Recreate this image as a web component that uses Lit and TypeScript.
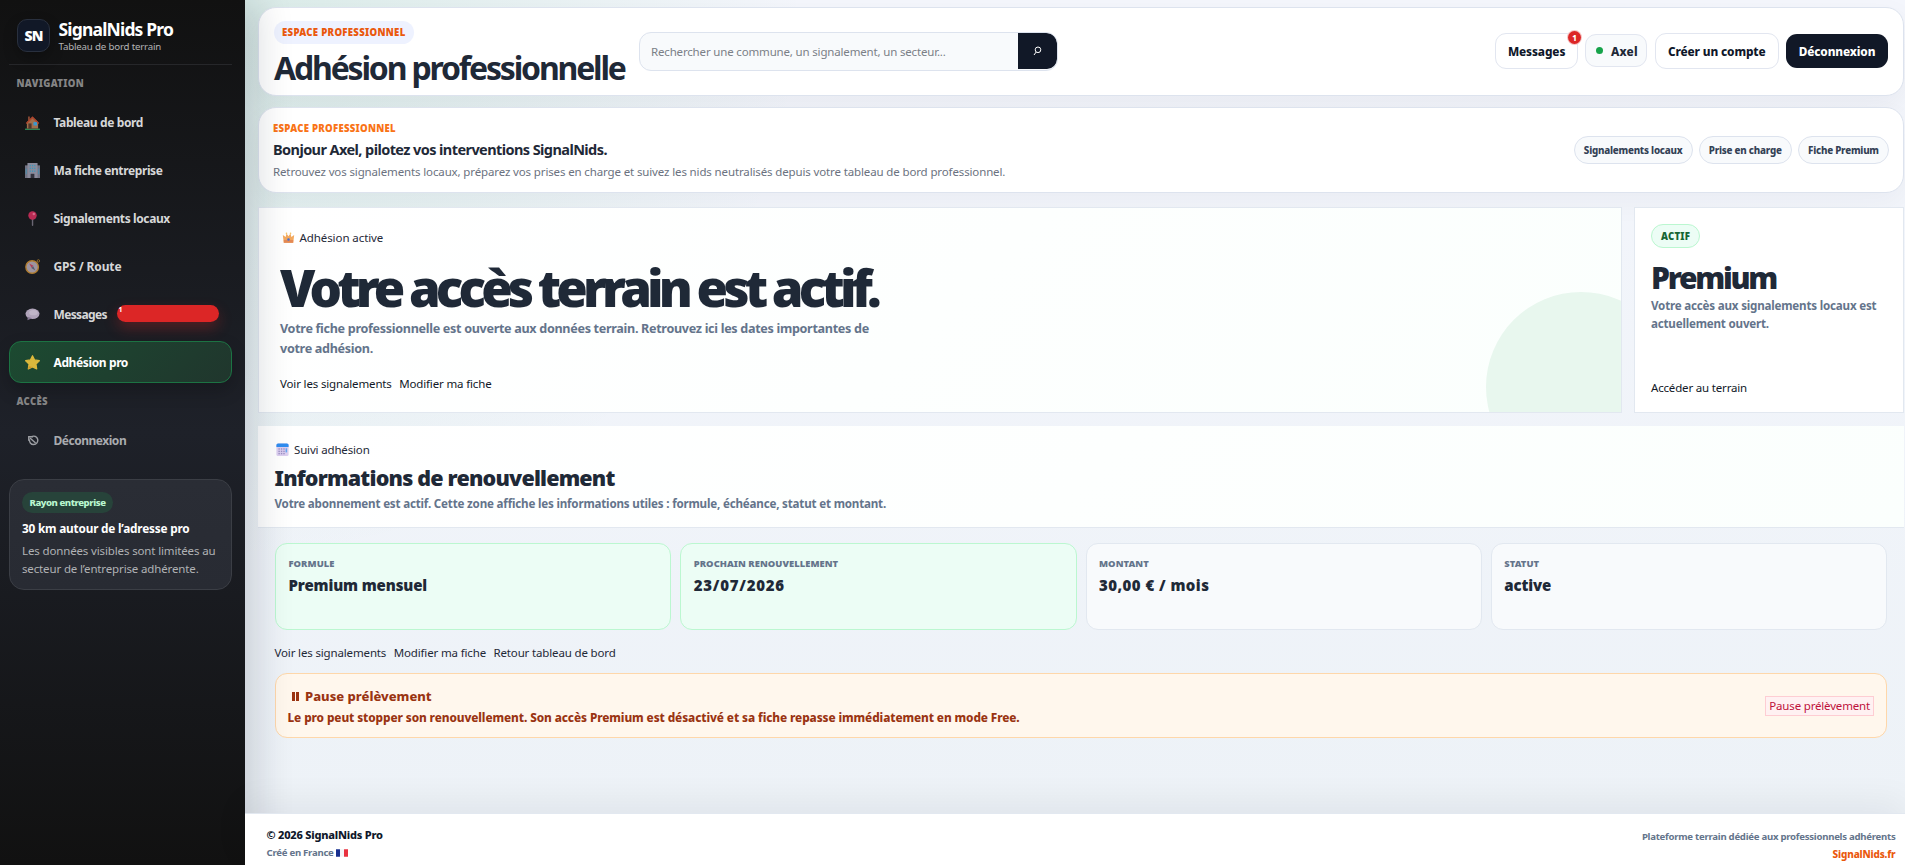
import { LitElement, html, css, svg } from 'lit';
import { customElement, property } from 'lit/decorators.js';
import { classMap } from 'lit/directives/class-map.js';

const icons: Record<string, unknown> = {
  home: svg`<rect x="0" y="14.4" width="16" height="1.6" rx=".6" fill="#2f8a57"/><path d="M2 7.5 8 2l6 5.5v7H2z" fill="#a8754e"/><rect x="3.2" y="1.6" width="2" height="4" fill="#8a4a35"/><path d="M.8 8.600 8 1.200l7.200 7.400-1.100 1L8 3.600 1.900 9.600z" fill="#b5482f"/><rect x="3.600" y="9" width="3.400" height="5.500" fill="#54372c"/><rect x="9" y="7.600" width="3.800" height="3.600" fill="#3aa0d8"/>`,
  building: svg`<rect x="0" y="2.500" width="4" height="13.500" fill="#77788a"/><rect x="12" y="2.500" width="4" height="13.500" fill="#77788a"/><rect x="2.600" y="0" width="10.800" height="16" rx=".6" fill="#9192a3"/><g fill="#3f9fc4"><rect x="5" y="2" width="1.300" height="1.500"/><rect x="7.400" y="2" width="1.300" height="1.500"/><rect x="9.800" y="2" width="1.300" height="1.500"/><rect x="5" y="5" width="1.300" height="1.500"/><rect x="7.400" y="5" width="1.300" height="1.500"/><rect x="9.800" y="5" width="1.300" height="1.500"/><rect x="5" y="8" width="1.300" height="1.500"/><rect x="7.400" y="8" width="1.300" height="1.500"/><rect x="9.800" y="8" width="1.300" height="1.500"/><rect x=".8" y="6" width=".8" height="6"/><rect x="14.300" y="6" width=".8" height="6"/></g><path d="M6 16v-4.500h4V16z" fill="#33343f"/>`,
  pin: svg`<rect x="7.300" y="8" width="1.500" height="8" rx=".7" fill="#6f6b78"/><circle cx="8" cy="4.800" r="4.500" fill="#c22c56"/><circle cx="9.400" cy="3.200" r="1.300" fill="#e2708f"/>`,
  compass: svg`<circle cx="14.300" cy="2" r="1.300" fill="none" stroke="#a97a30" stroke-width=".9"/><circle cx="7.600" cy="8.500" r="6.700" fill="#a59ba6" stroke="#b98331" stroke-width="1.500"/><path d="M4.500 4.800 9 7.300 7 9.300z" fill="#b8405b"/><path d="m11 12.300-4.200-2.600 2-2z" fill="#5b6074"/>`,
  bubble: svg`<ellipse cx="8" cy="7.300" rx="7.500" ry="5.600" fill="#b9acc3"/><path d="M3 10.500 2.600 14l5-2z" fill="#8c7c9a"/><ellipse cx="9" cy="6" rx="4.500" ry="2.800" fill="#c9bfd1"/>`,
  star: svg`<path d="m8 .8 2.300 4.500 5 .8-3.600 3.600.8 5.200L8 12.700l-4.500 2.200.8-5.200L.7 6.100l5-.8z" fill="#e6bf3d" stroke="#e6bf3d" stroke-width="1.300" stroke-linejoin="round"/><path d="m8 12.700-4.500 2.200.5-3z" fill="#d99a2b"/>`,
  power: svg`<g fill="none" stroke="#a3a5aa" stroke-width="1.500"><path d="M7 3.900A4.500 4.500 0 1 1 4.800 6.800"/><path d="m5.300 5.300 6 5.400"/><path d="M4 8.300V4h4.600"/></g>`,
  crown: svg`<path d="m1 5 3.500 2.500L5.600 3 8 6.500 10.400 3l1.100 4.500L15 5l-1.200 9.500H2.200z" fill="#f3a95e"/><path d="M2.200 11h11.600v3.500H2.200z" fill="#e58a55"/><circle cx="8" cy="10.500" r="1.500" fill="#4a6fd0"/><circle cx="5.500" cy="2.700" r="1" fill="#f6c15a"/><circle cx="10.500" cy="2.700" r="1" fill="#f6c15a"/>`,
  calendar: svg`<rect x=".5" y=".5" width="15" height="15.500" rx="2" fill="#dccff0"/><path d="M.5 4.800V2.500a2 2 0 0 1 2-2h11a2 2 0 0 1 2 2v2.300z" fill="#2f8df0"/><g fill="#9b8fc4"><rect x="3" y="6.500" width="1.700" height="1.700"/><rect x="6" y="6.500" width="1.700" height="1.700"/><rect x="9" y="6.500" width="1.700" height="1.700"/><rect x="3" y="9.500" width="1.700" height="1.700"/><rect x="6" y="9.500" width="1.700" height="1.700"/><rect x="9" y="9.500" width="1.700" height="1.700"/><rect x="3" y="12.300" width="1.700" height="1.600"/><rect x="6" y="12.300" width="1.700" height="1.600"/><rect x="9" y="12.300" width="1.700" height="1.600"/></g><rect x="11.800" y="6.500" width="1.900" height="5" fill="#67a8f0"/>`,
  flag: svg`<path d="M0 3h5.300v10H0z" fill="#17308f"/><path d="M5.300 3h5.400v10H5.300z" fill="#f3f3f6"/><path d="M10.700 3H16v10h-5.300z" fill="#e8313f"/>`,
};

@customElement('sn-icon')
class SnIcon extends LitElement {
  @property() name = '';
  static styles = css`
    :host { display: inline-block; width: 15px; height: 15px; flex: none; }
    svg { display: block; width: 100%; height: 100%; }
  `;
  render() {
    return html`<svg viewBox="0 0 16 16">${icons[this.name]}</svg>`;
  }
}

const nav = [
  { icon: 'home', label: 'Tableau de bord' },
  { icon: 'building', label: 'Ma fiche entreprise' },
  { icon: 'pin', label: 'Signalements locaux' },
  { icon: 'compass', label: 'GPS / Route', fit: 'loose' },
  { icon: 'bubble', label: 'Messages', fit: 'tight', badge: '1' },
  { icon: 'star', label: 'Adhésion pro', active: true },
];

const stats = [
  { label: 'Formule', value: 'Premium mensuel', green: true },
  { label: 'Prochain renouvellement', value: '23/07/2026', green: true, num: 'date' },
  { label: 'Montant', value: '30,00 € / mois', num: 'num' },
  { label: 'Statut', value: 'active' },
];

@customElement('sn-sidebar')
class SnSidebar extends LitElement {
  static styles = css`
    :host {
      display: block; box-sizing: border-box; width: 245px; height: 865px; padding: 18px 13px 0 9px;
      background: linear-gradient(180deg, #111 0%, #1e2129 50%, #111 100%);
      box-shadow: 12px 0 35px rgba(15, 23, 42, 0.16);
      color: #fff; position: relative; z-index: 2;
    }
    .brand { display: flex; align-items: center; gap: 8.500px; padding: 0 8px 12px; border-bottom: 1px solid #26272a; }
    .logo {
      box-sizing: border-box; width: 33px; height: 33px; border: 1px solid #29303e; border-radius: 10px; margin-top: 1px;
      background: #111827; display: grid; place-items: center; font-size: 14px; font-weight: 900; letter-spacing: -0.06em;
      box-shadow: 0 6px 14px rgba(0, 0, 0, 0.25); line-height: 30px; 
    }
    .title { font-size: 17.500px; line-height: 20px; font-weight: 700; letter-spacing: -0.047em; margin-top: 1px; }
    .sub { margin-top: 1px; font-size: 9.700px; line-height: 13px; letter-spacing: -0.018em; color: #b4b4b5; margin-bottom: -1px; }
    .heading { margin: 12px 7.500px 10px; font-size: 9.600px; line-height: 14px; font-weight: 900; letter-spacing: 0.033em; color: #848485; text-transform: uppercase; }
    .nav { display: grid; gap: 6px; }
    .item {
      box-sizing: border-box; height: 42px; border: 1px solid transparent; border-radius: 12px; padding: 1px 12px 0 14.500px;
      display: flex; align-items: center; font-size: 12px; font-weight: 700; letter-spacing: -0.032em; color: #d6d7d8; white-space: nowrap;
    }
    sn-icon { margin-right: 14px; opacity: 0.95; }
    .loose { letter-spacing: -0.012em; }
    .tight { letter-spacing: -0.053em; }
    .active {
      background: linear-gradient(135deg, #1c4a31, #20362d); border-color: #1c7343; color: #fff;
      box-shadow: 0 8px 18px rgba(0, 0, 0, 0.2);
    }
    .badge {
      flex: 1; margin-left: 10.500px; height: 17px; border-radius: 9px; background: #dc2626; color: #fff; margin-bottom: 2px;
      font-size: 7px; line-height: 10px; padding-left: 1px; box-sizing: border-box; box-shadow: 0 6px 14px rgba(220, 38, 38, 0.3);
    }
    .muted { color: #a9abaf; letter-spacing: -0.04em; }
    .card {
      margin-top: 18px; border: 1px solid #3b3e45; border-radius: 15px; padding: 12px 12px 11px;
      background: linear-gradient(180deg, #2a2d35, #282b33);
    }
    .tag {
      display: inline-block; box-sizing: border-box; height: 21px; border-radius: 11px; padding: 0 7px 0 7.500px; background: #27433a;
      color: #bbf7d0; font-size: 9.600px; line-height: 21px; font-weight: 800; letter-spacing: -0.048em; vertical-align: top;
    }
    .ct { margin-top: 6px; font-size: 11.800px; line-height: 18px; font-weight: 700; letter-spacing: -0.017em; white-space: nowrap; }
    .cd { margin-top: 5px; font-size: 11.500px; line-height: 18px; letter-spacing: -0.012em; color: #b0b2b5; white-space: nowrap; }
  `;
  render() {
    return html`
      <div class="brand">
        <div class="logo">SN</div>
        <div>
          <div class="title">SignalNids Pro</div>
          <div class="sub">Tableau de bord terrain</div>
        </div>
      </div>
      <div class="heading">Navigation</div>
      <div class="nav">
        ${nav.map((n) => html`
          <div class=${classMap({ item: true, active: !!n.active })}>
            <sn-icon name=${n.icon}></sn-icon><span class=${n.fit ?? ''}>${n.label}</span>
            ${n.badge ? html`<span class="badge">${n.badge}</span>` : ''}
          </div>`)}
      </div>
      <div class="heading">Accès</div>
      <div class="item muted"><sn-icon name="power"></sn-icon><span>Déconnexion</span></div>
      <div class="card">
        <span class="tag">Rayon entreprise</span>
        <div class="ct">30 km autour de l’adresse pro</div>
        <div class="cd">Les données visibles sont limitées au<br />secteur de l’entreprise adhérente.</div>
      </div>
    `;
  }
}

@customElement('app-root')
class AppRoot extends LitElement {
  static styles = css`
    :host {
      display: grid; grid-template-columns: 245px 1fr; height: 865px; overflow: hidden;
      font-family: 'Noto Sans', 'Open Sans', sans-serif; font-size: 11.500px; line-height: 18px; color: #1f2937;
      background: #fff; white-space: nowrap;
    }
    .page { display: flex; flex-direction: column; min-width: 0; }
    .main {
      flex: 1; padding: 7px 1px 0 13px;
      background:
        radial-gradient(circle at 0% 0%, rgba(34, 160, 90, 0.12), transparent 560px),
        linear-gradient(180deg, #f4f6fc 0%, #edf2f7 100%);
    }
    .panel {
      box-sizing: border-box; border: 1px solid #dde3ee; border-radius: 18px; background: #fff;
      display: flex; justify-content: space-between;
    }
    .top { height: 89px; padding: 13px 15px 0; box-shadow: 0 10px 28px rgba(15, 23, 42, 0.05); }
    .pill {
      display: inline-block; height: 23px; padding: 0 8.500px 0 8px; border-radius: 12px; background: #eef2ff; color: #ea580c;
      font-size: 9.600px; line-height: 23px; font-weight: 900; letter-spacing: 0.031em; vertical-align: top;
    }
    h1, h2, p { margin: 0; }
    .top h1 { margin-top: 31px; font-size: 32px; line-height: 32px; font-weight: 700; letter-spacing: -0.068em; }
    .heading { width: 365px; flex: none; }
    .heading .pill { float: left; }
    .search {
      box-sizing: border-box; width: 419px; height: 39px; margin-top: 11px; border: 1px solid #dde3ee; border-radius: 12px;
      background: #f8fafc; display: flex; overflow: hidden;
    }
    .search .ph { flex: 1; padding-left: 11px; line-height: 38px; letter-spacing: -0.0145em; color: #7b8087; }
    .search .go { width: 39px; height: 36px; background: #111827; display: grid; place-items: center; border-radius: 0 10px 10px 0; }
    .go svg { width: 9px; height: 10px; display: block; }
    .actions { margin-left: auto; height: 59px; display: flex; align-items: center; gap: 7.300px; font-size: 11.800px; font-weight: 800; letter-spacing: -0.010em; color: #0f172a; }
    .btn { box-sizing: border-box; height: 36px; border: 1px solid #e2e6f0; border-radius: 11px; background: #fff; display: flex; align-items: center; justify-content: center; position: relative; padding-top: 1px; }
    .msg { width: 83px; }
    .user { width: 62px; height: 33px; background: #f8fafc; gap: 8px; color: #1f2937; letter-spacing: 0.02em; padding-left: 1px; }
    .user i { width: 7px; height: 7px; border-radius: 50%; background: #16a34a; margin-bottom: 1px; }
    .create { width: 124px; }
    .out { width: 102px; height: 34px; border: 0; background: #111827; color: #fff; }
    .count {
      position: absolute; right: -4px; top: -3px; width: 13px; height: 13px; border-radius: 50%; background: #dc2626; color: #fff;
      font-size: 8px; line-height: 13px; text-align: center; box-shadow: 0 0 0 1px #f6c4c4;
    }
    .hello { height: 86px; margin-top: 11px; padding: 14px 14px 0; box-shadow: 0 10px 28px rgba(15, 23, 42, 0.04); }
    .kicker { font-size: 9.600px; line-height: 14px; font-weight: 900; letter-spacing: 0.028em; color: #f97316; }
    .hello h2 { margin-top: 2.500px; font-size: 14.500px; line-height: 20px; font-weight: 700; letter-spacing: -0.040em; }
    .hello p { margin-top: 4px; letter-spacing: -0.0115em; color: #6b7280; }
    .chips { display: flex; gap: 6px; margin-top: 14px; }
    .chip { box-sizing: border-box; height: 28px; border: 1px solid #dde3ee; border-radius: 14px; background: #f8fafc; padding: 0 9.200px; line-height: 28px; font-size: 9.800px; font-weight: 800; letter-spacing: -0.023em; color: #334155; }
    .row { display: grid; grid-template-columns: 1364px 270px; gap: 12px; margin: 14px 0 0; }
    .box { box-sizing: border-box; height: 206px; border: 1px solid #e2e8f0; background: #fff; position: relative; overflow: hidden; }
    .hero { padding: 20.500px 21px 0; background: linear-gradient(135deg, #fff, #fbfffd); }
    .hero::after { content: ''; position: absolute; right: -55px; bottom: -70px; width: 190px; height: 190px; border-radius: 50%; background: #e8f7ee; }
    .eyebrow { display: flex; align-items: center; letter-spacing: -0.007em; }
    .eyebrow sn-icon { width: 13px; height: 13px; margin: 0 5px 0 1.500px; }
    .hero h1 { margin-top: 15px; font-size: 51px; line-height: 51px; font-weight: 900; letter-spacing: -0.095em; }
    .hero p { margin-top: 6px; font-size: 12.600px; line-height: 20px; font-weight: 700; letter-spacing: -0.025em; color: #64748b; }
    .links { display: flex; gap: 7.500px; letter-spacing: -0.013em; color: #111827; }
    .hero .links { margin-top: 16px; }
    .offer { padding: 16px 16px 15px; display: flex; flex-direction: column; align-items: flex-start; }
    .state { box-sizing: border-box; height: 24px; border: 1px solid #bbf7d0; border-radius: 12px; background: #ecfdf5; padding: 0 9px; line-height: 23px; font-size: 9.600px; font-weight: 900; color: #166534; }
    .offer h2 { margin-top: 15px; font-size: 30px; line-height: 30px; font-weight: 900; letter-spacing: -0.075em; }
    .offer p { margin-top: 3.500px; font-size: 11.600px; font-weight: 700; letter-spacing: -0.017em; color: #64748b; }
    .offer span { margin-top: auto; letter-spacing: -0.015em; color: #111827; }
    .offer .state { margin-top: 0; letter-spacing: 0.022em; color: #166534; }
    .sect { box-sizing: border-box; height: 102px; margin-top: 13px; padding: 14.500px 17px 0 16.500px; border-bottom: 1px solid #e2e8f0; background: linear-gradient(135deg, #fff, #fbfffd); }
    .sect .eyebrow { letter-spacing: -0.014em; }
    .sect h2 { margin-top: 7px; font-size: 21.500px; line-height: 24px; font-weight: 900; letter-spacing: -0.037em; }
    .sect p { margin-top: 5px; font-size: 11.600px; font-weight: 700; letter-spacing: -0.016em; color: #64748b; }
    .body { padding: 15px 17px 0; }
    .stats { display: grid; grid-template-columns: repeat(4, 1fr); gap: 9px; }
    .stat { box-sizing: border-box; height: 87px; border: 1px solid #e2e8f0; border-radius: 12px; background: #f8fafc; padding: 13px 12.500px; }
    .green { background: #ecfdf5; border-color: #bbf7d0; }
    .stat b { display: block; font-size: 9.400px; line-height: 14px; font-weight: 900; letter-spacing: 0.005em; text-transform: uppercase; color: #64748b; }
    .stat strong { display: block; margin-top: 4px; font-size: 15px; line-height: 20px; font-weight: 900; letter-spacing: -0.009em; }
    .stat .date { letter-spacing: 0.050em; }
    .stat .num { letter-spacing: 0.030em; }
    .body .links { margin: 13.500px 0 0 -0.500px; color: #1f2937; }
    .alert {
      box-sizing: border-box; height: 65px; margin-top: 11.500px; border: 1px solid #fed7aa; border-radius: 12px; background: #fff7ed; color: #9a3412;
      padding: 13px 12px 0 11.500px; display: flex; justify-content: space-between; font-weight: 800;
    }
    .alert .at { display: flex; align-items: center; font-size: 13px; padding-left: 4px; }
    .bars { width: 7px; height: 9px; box-sizing: border-box; border: solid #9a3412; border-width: 0 3px; margin: 1px 6.500px 0 0; }
    .alert p { margin-top: 3px; font-size: 11.800px; letter-spacing: -0.0085em; }
    .stop { box-sizing: border-box; height: 20px; margin-top: 8.500px; padding: 0 3px; border: 1px solid #fecdd3; background: #fff1f2; color: #be123c; font-weight: 400; letter-spacing: -0.015em; }
    .foot {
      box-sizing: border-box; height: 52px; border-top: 1px solid #e2e8f0; background: #fff; position: relative; z-index: 3; padding: 13px 9.500px 0 21.500px;
      display: flex; justify-content: space-between; color: #64748b; font-size: 9.600px; line-height: 14px; font-weight: 700; letter-spacing: -0.027em;
      box-shadow: 0 -10px 35px rgba(15, 23, 42, 0.06);
    }
    .copy { font-size: 11px; line-height: 16px; font-weight: 800; letter-spacing: -0.020em; color: #0f172a; margin-bottom: 2.500px; }
    .made { display: flex; align-items: center; gap: 2.500px; }
    .made sn-icon { width: 12px; height: 12px; }
    .right { text-align: right; padding-top: 3px; }
    .site { margin-top: 2.500px; font-size: 10px; font-weight: 800; letter-spacing: -0.017em; color: #ea580c; }
  `;
  render() {
    return html`
      <sn-sidebar></sn-sidebar>
      <div class="page">
        <div class="main">
          <header class="panel top">
            <div class="heading">
              <span class="pill">ESPACE PROFESSIONNEL</span>
              <h1>Adhésion professionnelle</h1>
            </div>
            <div class="search">
              <span class="ph">Rechercher une commune, un signalement, un secteur...</span>
              <span class="go"><svg viewBox="0 0 9 10"><g fill="none" stroke="#fff" stroke-width="1"><circle cx="5" cy="3.800" r="2.800"/><path d="M3.200 6 1 9"/></g></svg></span>
            </div>
            <div class="actions">
              <span class="btn msg">Messages<span class="count">1</span></span>
              <span class="btn user"><i></i>Axel</span>
              <span class="btn create">Créer un compte</span>
              <span class="btn out">Déconnexion</span>
            </div>
          </header>

          <section class="panel hello">
            <div>
              <div class="kicker">ESPACE PROFESSIONNEL</div>
              <h2>Bonjour Axel, pilotez vos interventions SignalNids.</h2>
              <p>Retrouvez vos signalements locaux, préparez vos prises en charge et suivez les nids neutralisés depuis votre tableau de bord professionnel.</p>
            </div>
            <div class="chips">
              <span class="chip">Signalements locaux</span><span class="chip">Prise en charge</span><span class="chip">Fiche Premium</span>
            </div>
          </section>

          <div class="row">
            <section class="box hero">
              <div class="eyebrow"><sn-icon name="crown"></sn-icon>Adhésion active</div>
              <h1>Votre accès terrain est actif.</h1>
              <p>Votre fiche professionnelle est ouverte aux données terrain. Retrouvez ici les dates importantes de<br />votre adhésion.</p>
              <div class="links"><span>Voir les signalements</span><span>Modifier ma fiche</span></div>
            </section>
            <section class="box offer">
              <span class="state">ACTIF</span>
              <h2>Premium</h2>
              <p>Votre accès aux signalements locaux est<br />actuellement ouvert.</p>
              <span>Accéder au terrain</span>
            </section>
          </div>

          <section class="sect">
            <div class="eyebrow"><sn-icon name="calendar"></sn-icon>Suivi adhésion</div>
            <h2>Informations de renouvellement</h2>
            <p>Votre abonnement est actif. Cette zone affiche les informations utiles : formule, échéance, statut et montant.</p>
          </section>

          <div class="body">
            <div class="stats">
              ${stats.map((s) => html`
                <div class=${classMap({ stat: true, green: !!s.green })}><b>${s.label}</b><strong class=${s.num ?? ''}>${s.value}</strong></div>`)}
            </div>
            <div class="links"><span>Voir les signalements</span><span>Modifier ma fiche</span><span>Retour tableau de bord</span></div>
            <div class="alert">
              <div>
                <div class="at"><i class="bars"></i>Pause prélèvement</div>
                <p>Le pro peut stopper son renouvellement. Son accès Premium est désactivé et sa fiche repasse immédiatement en mode Free.</p>
              </div>
              <span class="stop">Pause prélèvement</span>
            </div>
          </div>
        </div>

        <footer class="foot">
          <div>
            <div class="copy">© 2026 SignalNids Pro</div>
            <div class="made">Créé en France<sn-icon name="flag"></sn-icon></div>
          </div>
          <div class="right">
            <div>Plateforme terrain dédiée aux professionnels adhérents</div>
            <div class="site">SignalNids.fr</div>
          </div>
        </footer>
      </div>
    `;
  }
}
